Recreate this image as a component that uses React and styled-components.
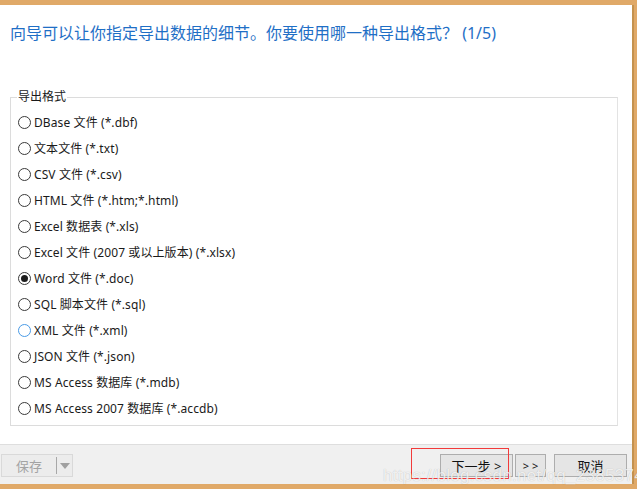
import React from 'react'
import styled, { createGlobalStyle } from 'styled-components'

const formats = [
  'DBase 文件 (*.dbf)',
  '文本文件 (*.txt)',
  'CSV 文件 (*.csv)',
  'HTML 文件 (*.htm;*.html)',
  'Excel 数据表 (*.xls)',
  'Excel 文件 (2007 或以上版本) (*.xlsx)',
  'Word 文件 (*.doc)',
  'SQL 脚本文件 (*.sql)',
  'XML 文件 (*.xml)',
  'JSON 文件 (*.json)',
  'MS Access 数据库 (*.mdb)',
  'MS Access 2007 数据库 (*.accdb)',
]

const App = () => {
  return (
    <Screen>
      <GlobalStyle />
      <Window>
        <Main>
          <Heading>向导可以让你指定导出数据的细节。你要使用哪一种导出格式？ (1/5)</Heading>
          <Group>
            <Legend>导出格式</Legend>
            {formats.map((f, i) => (
              <Row key={f}>
                <Radio checked={i === 6} hover={i === 8} />
                <Label>{f}</Label>
              </Row>
            ))}
          </Group>
        </Main>
        <Footer>
          <SaveButton>
            <SaveText>保存</SaveText>
            <SaveArrow>
              <Triangle />
            </SaveArrow>
          </SaveButton>
          <Actions>
            <Button>下一步 &gt;</Button>
            <SmallButton>&gt; &gt;</SmallButton>
            <CancelButton>取消</CancelButton>
          </Actions>
        </Footer>
      </Window>
      <Highlight />
      <Watermark>https://blog.csdn.net/qq_23853743</Watermark>
    </Screen>
  )
}

const GlobalStyle = createGlobalStyle`
  html, body {
    margin: 0;
    padding: 0;
    background: #e0a968;
  }
  * {
    box-sizing: border-box;
  }
`

const Screen = styled.div`
  position: relative;
  width: 637px;
  height: 489px;
  overflow: hidden;
  background: #e0a968;
  padding: 5px 3px 5px 0;
  font-family: "Noto Sans", "Noto Sans CJK SC", sans-serif;
`

const Window = styled.div`
  height: 100%;
  display: flex;
  flex-direction: column;
  background: #ffffff;
  border-right: 2px solid #c4924f;
`

const Main = styled.div`
  flex: 1;
  display: flex;
  flex-direction: column;
  padding: 0 14px 0 10px;
`

const Heading = styled.div`
  margin-top: 17px;
  height: 22px;
  line-height: 22px;
  font-size: 16px;
  color: #1f6fc6;
  white-space: nowrap;
`

const Group = styled.fieldset`
  margin: 46px 0 0 0;
  padding: 5px 0 4px 7px;
  border: 1px solid #dcdcdc;
  border-right-color: #e3e3e3;
  min-width: 0;
`

const Legend = styled.legend`
  padding: 0 1px;
  margin-left: -1px;
  font-size: 12px;
  line-height: 14px;
  color: #1a1a1a;
`

const Row = styled.div`
  display: flex;
  align-items: center;
  height: 26px;
`

const Radio = styled.span`
  position: relative;
  width: 13px;
  height: 13px;
  border-radius: 50%;
  border: 1px solid ${p => (p.hover ? '#4a9be6' : '#3a3a3a')};
  background: #ffffff;
  margin-right: 3px;
  flex-shrink: 0;
  &::after {
    content: '';
    display: ${p => (p.checked ? 'block' : 'none')};
    position: absolute;
    left: 2px;
    top: 2px;
    width: 7px;
    height: 7px;
    border-radius: 50%;
    background: #1c1c1c;
  }
`

const Label = styled.span`
  font-size: 12px;
  letter-spacing: 0.1px;
  color: #1a1a1a;
  white-space: nowrap;
`

const Footer = styled.div`
  height: 40px;
  flex-shrink: 0;
  background: #f0f0f0;
  border-top: 1px solid #dedede;
  display: flex;
  align-items: flex-start;
  justify-content: space-between;
  padding: 9px 5px 0 1px;
`

const SaveButton = styled.div`
  display: flex;
  width: 72px;
  height: 23px;
  border: 1px solid #d9d9d9;
  background: #ececec;
`

const SaveText = styled.div`
  width: 55px;
  display: flex;
  align-items: center;
  justify-content: center;
  font-size: 13px;
  color: #a3a3a3;
  border-right: 1px solid #a8a8a8;
  margin: 2px 0;
`

const SaveArrow = styled.div`
  flex: 1;
  display: flex;
  align-items: center;
  justify-content: center;
`

const Triangle = styled.span`
  width: 0;
  height: 0;
  border-left: 5px solid transparent;
  border-right: 5px solid transparent;
  border-top: 6px solid #a0a0a0;
`

const Actions = styled.div`
  display: flex;
  align-items: center;
`

const Button = styled.div`
  width: 73px;
  height: 23px;
  display: flex;
  align-items: center;
  justify-content: center;
  border: 1px solid #adadad;
  background: #e5e5e5;
  font-size: 13px;
  color: #111111;
  white-space: nowrap;
`

const SmallButton = styled(Button)`
  width: 31px;
  margin-left: 2px;
  font-size: 11px;
`

const CancelButton = styled(Button)`
  margin-left: 8px;
`

const Highlight = styled.div`
  position: absolute;
  left: 411px;
  top: 448px;
  width: 98px;
  height: 31px;
  border: 1px solid #f23b3b;
  pointer-events: none;
`

const Watermark = styled.div`
  position: absolute;
  left: 383px;
  top: 466px;
  font-size: 17px;
  line-height: 20px;
  font-family: "Liberation Sans", "DejaVu Sans", sans-serif;
  color: rgba(255, 255, 255, 0.8);
  text-shadow: 0 0 1px rgba(0, 0, 0, 0.25);
  white-space: nowrap;
  letter-spacing: 0.3px;
  pointer-events: none;
`

export default App
